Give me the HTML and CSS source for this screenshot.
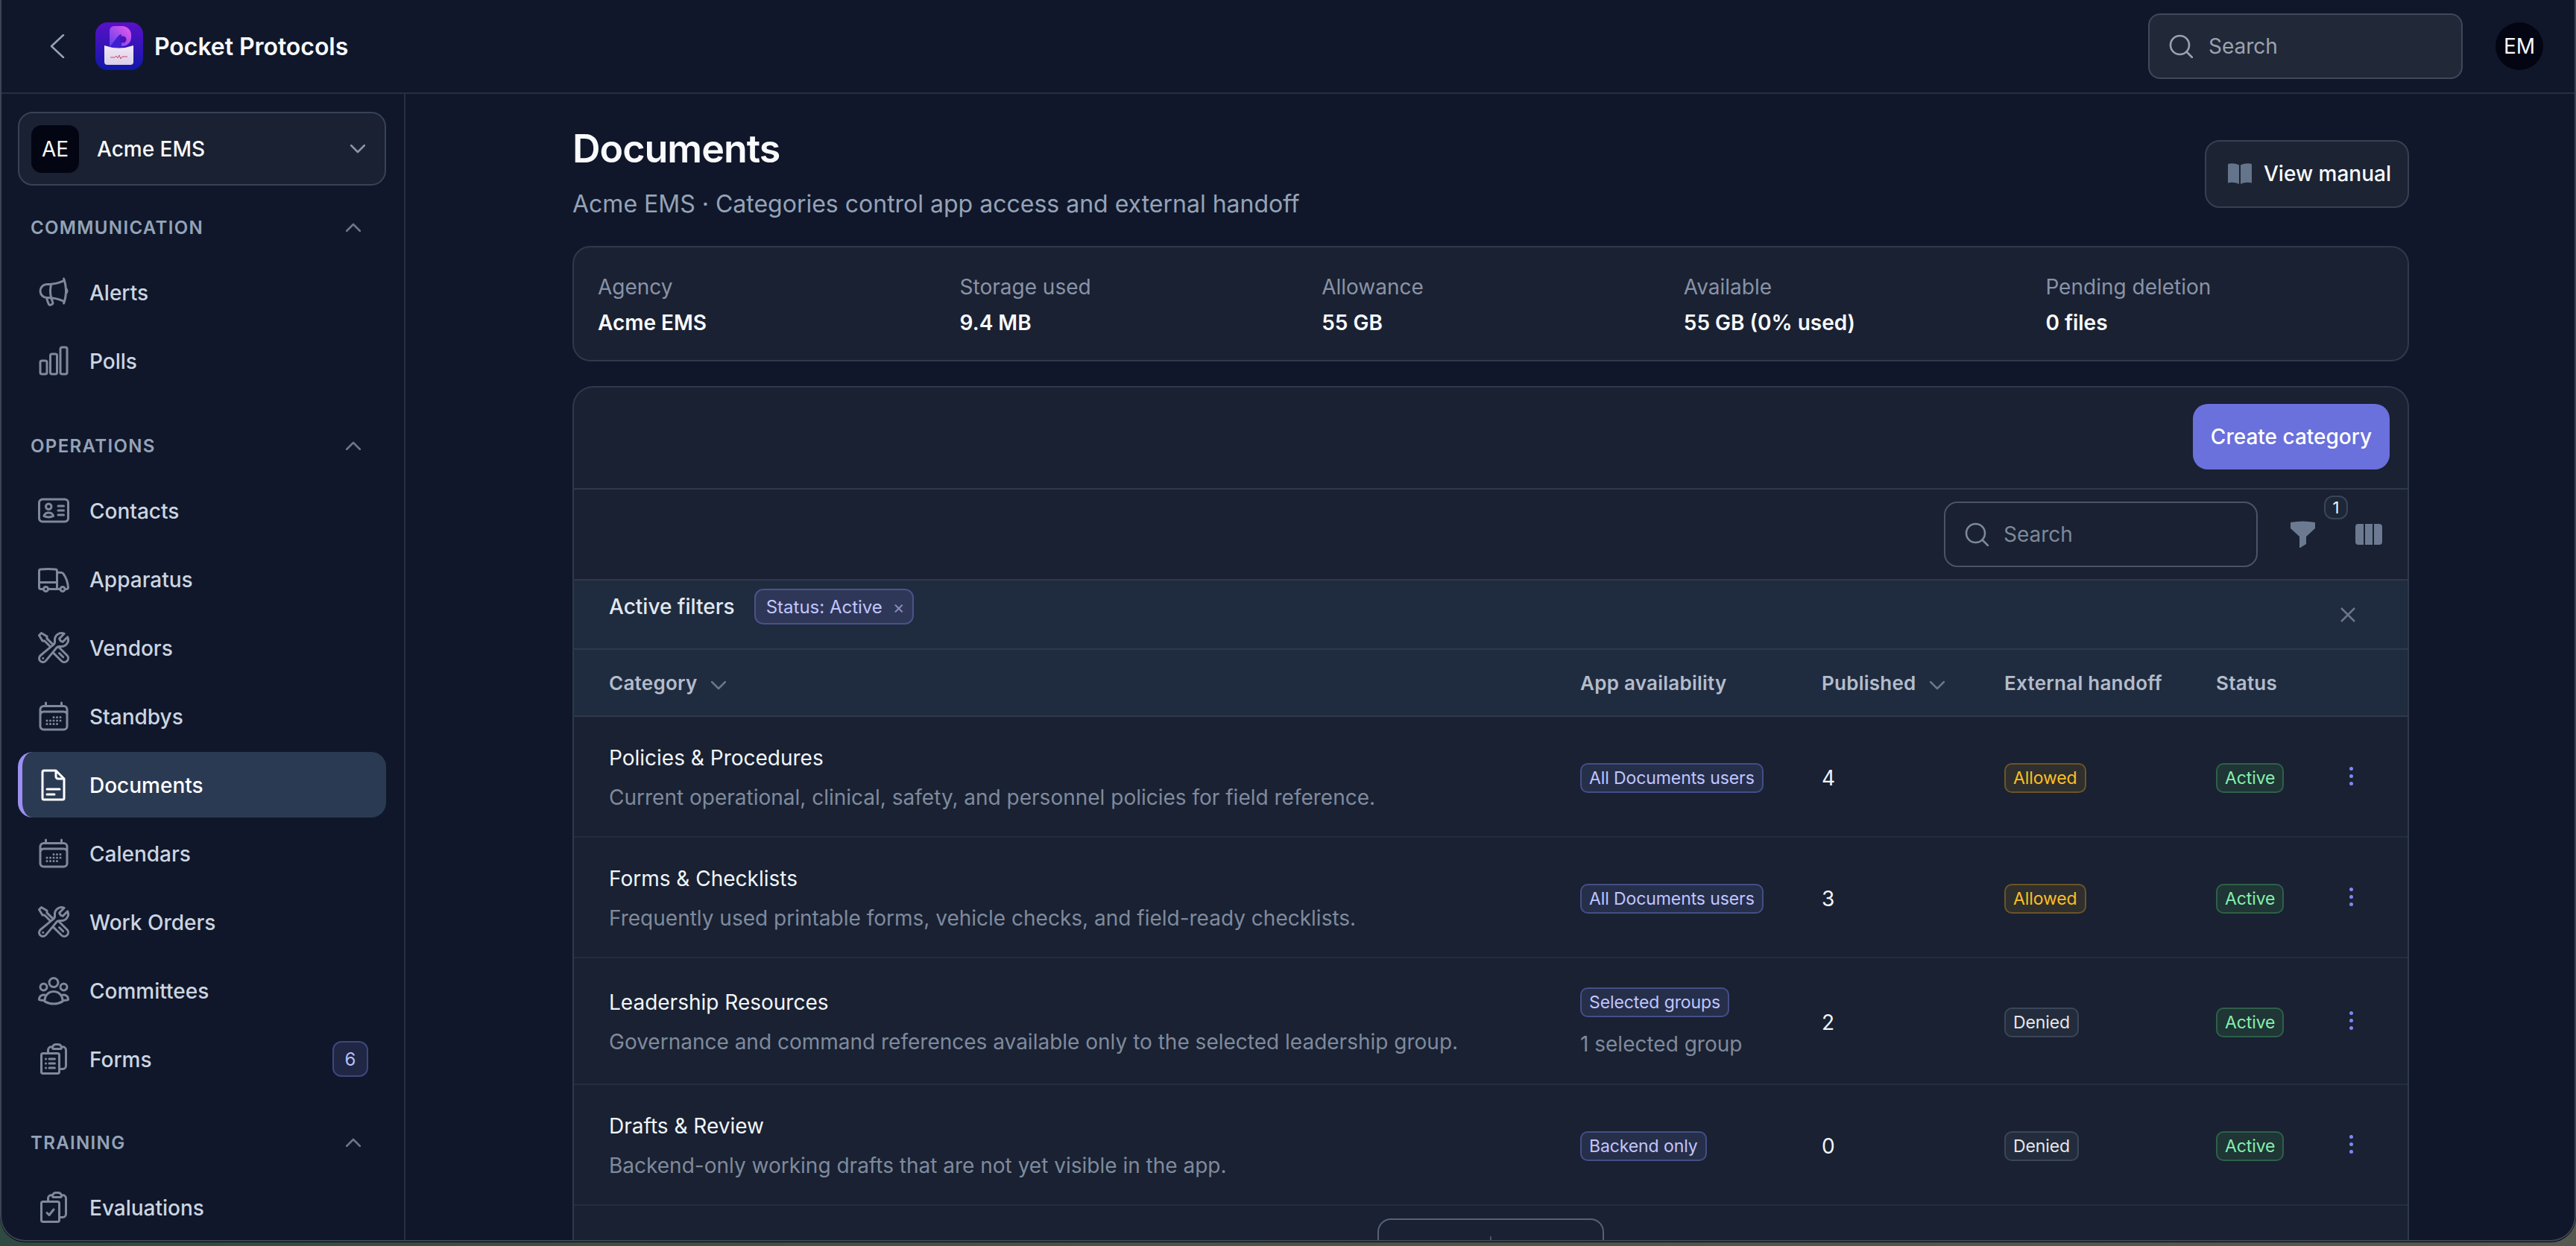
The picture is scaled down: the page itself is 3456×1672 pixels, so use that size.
FILE: index.html
```html
<!DOCTYPE html>
<html lang="en">
<head>
    <meta charset="UTF-8">
    <meta name="viewport" content="width=device-width, initial-scale=1.0">
    <title>Documents</title>
    <link rel="stylesheet" href="styles.css">
</head>
<body>
    <!-- icon sprite -->
    <svg class="sprite">
        <symbol id="i-megaphone" viewBox="0 0 24 24"><path d="M10.34 15.84c-.688-.06-1.386-.09-2.09-.09H7.5a4.5 4.5 0 1 1 0-9h.75c.704 0 1.402-.03 2.09-.09m0 9.18c.253.962.584 1.892.985 2.783.247.55.06 1.21-.463 1.511l-.657.38c-.551.318-1.26.117-1.527-.461a20.845 20.845 0 0 1-1.44-4.282m3.102.069a18.03 18.03 0 0 1-.59-4.59c0-1.586.205-3.124.59-4.59m0 9.18a23.848 23.848 0 0 1 8.835 2.535M10.34 6.66a23.847 23.847 0 0 0 8.835-2.535m0 0A23.74 23.74 0 0 0 18.795 3m.38 1.125a23.91 23.91 0 0 1 1.014 5.395m-1.014 8.855c-.118.38-.245.754-.38 1.125m.38-1.125a23.91 23.91 0 0 0 1.014-5.395m0-3.46c.495.413.811 1.035.811 1.73 0 .695-.316 1.317-.811 1.73m0-3.46a24.347 24.347 0 0 1 0 3.46"/></symbol>
        <symbol id="i-chart" viewBox="0 0 24 24"><path d="M3 13.125C3 12.504 3.504 12 4.125 12h2.25c.621 0 1.125.504 1.125 1.125v6.75C7.5 20.496 6.996 21 6.375 21h-2.25A1.125 1.125 0 0 1 3 19.875v-6.75ZM9.75 8.625c0-.621.504-1.125 1.125-1.125h2.25c.621 0 1.125.504 1.125 1.125v11.25c0 .621-.504 1.125-1.125 1.125h-2.25a1.125 1.125 0 0 1-1.125-1.125V8.625ZM16.5 4.125c0-.621.504-1.125 1.125-1.125h2.25C20.496 3 21 3.504 21 4.125v15.75c0 .621-.504 1.125-1.125 1.125h-2.25a1.125 1.125 0 0 1-1.125-1.125V4.125Z"/></symbol>
        <symbol id="i-card" viewBox="0 0 24 24"><path d="M15 9h3.75M15 12h3.75M15 15h3.75M4.500 19.500h15a2.250 2.250 0 0 0 2.250-2.250V6.750A2.250 2.250 0 0 0 19.500 4.500h-15a2.250 2.250 0 0 0-2.250 2.250v10.500A2.250 2.250 0 0 0 4.500 19.500Zm6-10.125a1.875 1.875 0 1 1-3.750 0 1.875 1.875 0 0 1 3.750 0Zm1.294 6.336a6.721 6.721 0 0 1-3.170.789 6.721 6.721 0 0 1-3.168-.789 3.376 3.376 0 0 1 6.338 0Z"/></symbol>
        <symbol id="i-truck" viewBox="0 0 24 24"><path d="M8.25 18.75a1.5 1.5 0 0 1-3 0m3 0a1.5 1.5 0 0 0-3 0m3 0h6m-9 0H3.375a1.125 1.125 0 0 1-1.125-1.125V14.25m17.25 4.5a1.5 1.5 0 0 1-3 0m3 0a1.5 1.5 0 0 0-3 0m3 0h1.125c.621 0 1.129-.504 1.09-1.124a17.902 17.902 0 0 0-3.213-9.193 2.056 2.056 0 0 0-1.58-.86H14.25M16.5 18.75h-2.25m0-11.177v-.958c0-.568-.422-1.048-.987-1.106a48.554 48.554 0 0 0-10.026 0 1.106 1.106 0 0 0-.987 1.106v7.635m12-6.677v6.677m0 4.5v-4.5m0 0h-12"/></symbol>
        <symbol id="i-tools" viewBox="0 0 24 24"><path d="M11.42 15.17 17.25 21A2.652 2.652 0 0 0 21 17.25l-5.877-5.877M11.42 15.17l2.496-3.03c.317-.384.74-.626 1.208-.766M11.42 15.17l-4.655 5.653a2.548 2.548 0 1 1-3.586-3.586l6.837-5.63m5.108-.233c.55-.164 1.163-.188 1.743-.14a4.5 4.5 0 0 0 4.486-6.336l-3.276 3.277a3.004 3.004 0 0 1-2.25-2.25l3.276-3.276a4.5 4.5 0 0 0-6.336 4.486c.091 1.076-.071 2.264-.904 2.95l-.102.085m-1.745 1.437L5.909 7.5H4.5L2.25 3.75l1.5-1.5L7.5 4.5v1.409l4.26 4.26m-1.745 1.437 1.745-1.437m6.615 8.206L15.75 15.75M4.867 19.125h.008v.008h-.008v-.008Z"/></symbol>
        <symbol id="i-calendar" viewBox="0 0 24 24"><path d="M6.75 3v2.25M17.25 3v2.25M3 18.75V7.5a2.25 2.25 0 0 1 2.25-2.25h13.5A2.25 2.25 0 0 1 21 7.5v11.25m-18 0A2.25 2.25 0 0 0 5.25 21h13.5A2.25 2.25 0 0 0 21 18.75m-18 0v-7.5A2.25 2.25 0 0 1 5.25 9h13.5A2.25 2.25 0 0 1 21 11.25v7.5m-9-6h.008v.008H12v-.008ZM12 15h.008v.008H12V15Zm0 2.25h.008v.008H12v-.008ZM9.75 15h.008v.008H9.75V15Zm0 2.25h.008v.008H9.75v-.008ZM7.5 15h.008v.008H7.5V15Zm0 2.25h.008v.008H7.5v-.008Zm6.75-4.5h.008v.008h-.008v-.008Zm0 2.25h.008v.008h-.008V15Zm0 2.25h.008v.008h-.008v-.008Zm2.25-4.5h.008v.008H16.5v-.008Zm0 2.25h.008v.008H16.5V15Z"/></symbol>
        <symbol id="i-doc" viewBox="0 0 24 24"><path d="M5.5 2.5h8l5.5 5.5v13a1 1 0 0 1-1 1H5.5a1 1 0 0 1-1-1V3.5a1 1 0 0 1 1-1ZM13.5 2.5v4A1.5 1.5 0 0 0 15 8h4M7.5 15h8.5M7.5 18.5h5"/></symbol>
        <symbol id="i-group" viewBox="0 0 24 24"><path d="M18 18.72a9.094 9.094 0 0 0 3.741-.479 3 3 0 0 0-4.682-2.72m.94 3.198.001.031c0 .225-.012.447-.037.666A11.944 11.944 0 0 1 12 21c-2.17 0-4.207-.576-5.963-1.584A6.062 6.062 0 0 1 6 18.719m12 0a5.971 5.971 0 0 0-.941-3.197m0 0A5.995 5.995 0 0 0 12 12.75a5.995 5.995 0 0 0-5.058 2.772m0 0a3 3 0 0 0-4.681 2.72 8.986 8.986 0 0 0 3.74.477m.94-3.197a5.971 5.971 0 0 0-.94 3.197M15 6.75a3 3 0 1 1-6 0 3 3 0 0 1 6 0Zm6 3a2.25 2.25 0 1 1-4.5 0 2.25 2.25 0 0 1 4.5 0Zm-13.5 0a2.25 2.25 0 1 1-4.5 0 2.25 2.25 0 0 1 4.5 0Z"/></symbol>
        <symbol id="i-cliplist" viewBox="0 0 24 24"><path d="M9 12h3.75M9 15h3.75M9 18h3.75m3 .75H18a2.25 2.25 0 0 0 2.25-2.25V6.108c0-1.135-.845-2.098-1.976-2.192a48.424 48.424 0 0 0-1.123-.08m-5.801 0c-.065.21-.1.433-.1.664 0 .414.336.75.75.75h4.5a.75.75 0 0 0 .75-.75 2.25 2.25 0 0 0-.1-.664m-5.8 0A2.251 2.251 0 0 1 13.5 2.25H15c1.012 0 1.867.668 2.15 1.586m-5.8 0c-.376.023-.75.05-1.124.08C9.095 4.01 8.25 4.973 8.25 6.108V8.25m0 0H4.875c-.621 0-1.125.504-1.125 1.125v11.25c0 .621.504 1.125 1.125 1.125h9.75c.621 0 1.125-.504 1.125-1.125V9.375c0-.621-.504-1.125-1.125-1.125H8.25ZM6.75 12h.008v.008H6.75V12Zm0 3h.008v.008H6.75V15Zm0 3h.008v.008H6.75V18Z"/></symbol>
        <symbol id="i-clipcheck" viewBox="0 0 24 24"><path d="M11.35 3.836c-.065.21-.1.433-.1.664 0 .414.336.75.75.75h4.5a.75.75 0 0 0 .75-.75 2.25 2.25 0 0 0-.1-.664m-5.8 0A2.251 2.251 0 0 1 13.5 2.25H15c1.012 0 1.867.668 2.15 1.586m-5.8 0c-.376.023-.75.05-1.124.08C9.095 4.01 8.25 4.973 8.25 6.108V8.25m8.9-4.414c.376.023.75.05 1.124.08 1.131.094 1.976 1.057 1.976 2.192V16.5A2.25 2.25 0 0 1 18 18.75h-2.25m-7.5-10.5H4.875c-.621 0-1.125.504-1.125 1.125v11.25c0 .621.504 1.125 1.125 1.125h9.75c.621 0 1.125-.504 1.125-1.125V18.75m-7.5-10.5h6.375c.621 0 1.125.504 1.125 1.125v9.375m-8.25-3 1.5 1.5 3-3.75"/></symbol>
        <symbol id="i-search" viewBox="0 0 32 32"><circle cx="14.5" cy="14.5" r="12.5"/><path d="M23.5 23.5 31 31"/></symbol>
        <symbol id="i-up" viewBox="0 0 20 12"><path d="M1 11 10 2l9 9"/></symbol>
        <symbol id="i-down" viewBox="0 0 20 12"><path d="m1 1 9 9 9-9"/></symbol>
    </svg>

    <div class="window">
        <header class="topbar">
            <svg class="back-icon" viewBox="0 0 20 32"><path d="M18 1 2 16l16 15"/></svg>
            <svg class="logo" viewBox="0 0 64 64">
                <defs>
                    <linearGradient id="logoBg" x1="0" y1="0" x2="0" y2="1">
                        <stop offset="0" stop-color="#5a10c8"/>
                        <stop offset="1" stop-color="#0f18a8"/>
                    </linearGradient>
                    <linearGradient id="logoP" x1="0" y1="1" x2="1" y2="0">
                        <stop offset="0" stop-color="#5a3cf0"/>
                        <stop offset="1" stop-color="#ee5ce8"/>
                    </linearGradient>
                    <linearGradient id="logoPocket" x1="0" y1="0" x2="0" y2="1">
                        <stop offset="0" stop-color="#f3e8f6"/>
                        <stop offset="1" stop-color="#d9cfe8"/>
                    </linearGradient>
                </defs>
                <rect width="64" height="64" rx="16" fill="url(#logoBg)"/>
                <path d="M19 33V11a6 6 0 0 1 6-6h11a12 12 0 0 1 12 12v3a12 12 0 0 1-12 12h-4v2Z" fill="url(#logoP)"/>
                <path d="M19 33 30 19q2-3 5-3v18h-3Z" fill="#3f1fd0"/>
                <circle cx="37" cy="23" r="4.500" fill="#4a12b8"/>
                <path d="M12 31q19.500 7 39 0v22a4 4 0 0 1-4 4H16a4 4 0 0 1-4-4Z" fill="url(#logoPocket)"/>
                <path d="M20 47h6l2-2 2 3 2-4 2 5 2-3h7" fill="none" stroke="#c84a62" stroke-width="1"/>
            </svg>
            <span class="app-name">Pocket Protocols</span>
            <div class="top-search">
                <svg class="search-icon"><use href="#i-search"/></svg>
                <span>Search</span>
            </div>
            <div class="user-avatar">EM</div>
        </header>

        <div class="layout">
            <aside class="sidebar">
                <div class="org-switch">
                    <span class="org-avatar">AE</span>
                    <span class="org-name">Acme EMS</span>
                    <svg class="org-chevron"><use href="#i-down"/></svg>
                </div>

                <div class="nav-section first">
                    <span>Communication</span>
                    <svg class="section-chevron"><use href="#i-up"/></svg>
                </div>
                <nav class="nav-list">
                    <a class="nav-item"><svg class="nav-icon"><use href="#i-megaphone"/></svg><span class="nav-label">Alerts</span></a>
                    <a class="nav-item"><svg class="nav-icon"><use href="#i-chart"/></svg><span class="nav-label">Polls</span></a>
                </nav>

                <div class="nav-section">
                    <span>Operations</span>
                    <svg class="section-chevron"><use href="#i-up"/></svg>
                </div>
                <nav class="nav-list">
                    <a class="nav-item"><svg class="nav-icon"><use href="#i-card"/></svg><span class="nav-label">Contacts</span></a>
                    <a class="nav-item"><svg class="nav-icon"><use href="#i-truck"/></svg><span class="nav-label">Apparatus</span></a>
                    <a class="nav-item"><svg class="nav-icon"><use href="#i-tools"/></svg><span class="nav-label">Vendors</span></a>
                    <a class="nav-item"><svg class="nav-icon"><use href="#i-calendar"/></svg><span class="nav-label">Standbys</span></a>
                    <a class="nav-item active"><svg class="nav-icon"><use href="#i-doc"/></svg><span class="nav-label">Documents</span></a>
                    <a class="nav-item"><svg class="nav-icon"><use href="#i-calendar"/></svg><span class="nav-label">Calendars</span></a>
                    <a class="nav-item"><svg class="nav-icon"><use href="#i-tools"/></svg><span class="nav-label">Work Orders</span></a>
                    <a class="nav-item"><svg class="nav-icon"><use href="#i-group"/></svg><span class="nav-label">Committees</span></a>
                    <a class="nav-item"><svg class="nav-icon"><use href="#i-cliplist"/></svg><span class="nav-label">Forms</span><span class="nav-count">6</span></a>
                </nav>

                <div class="nav-section last">
                    <span>Training</span>
                    <svg class="section-chevron"><use href="#i-up"/></svg>
                </div>
                <nav class="nav-list">
                    <a class="nav-item"><svg class="nav-icon"><use href="#i-clipcheck"/></svg><span class="nav-label">Evaluations</span></a>
                </nav>
            </aside>

            <main class="main">
                <div class="content">
                    <div class="page-head">
                        <div>
                            <h1>Documents</h1>
                            <p class="subtitle">Acme EMS · Categories control app access and external handoff</p>
                        </div>
                        <button class="manual-btn">
                            <svg class="book-icon" viewBox="0 0 32 28"><path d="M0 1c5-1.300 10-.8 15 1.500V28C10 25.800 5 25.300 0 26.500ZM32 1c-5-1.300-10-.8-15 1.500V28c5-2.200 10-2.700 15-1.500Z"/></svg>
                            View manual
                        </button>
                    </div>

                    <section class="stats">
                        <div><div class="stat-label">Agency</div><div class="stat-value">Acme EMS</div></div>
                        <div><div class="stat-label">Storage used</div><div class="stat-value">9.4 MB</div></div>
                        <div><div class="stat-label">Allowance</div><div class="stat-value">55 GB</div></div>
                        <div><div class="stat-label">Available</div><div class="stat-value">55 GB (0% used)</div></div>
                        <div><div class="stat-label">Pending deletion</div><div class="stat-value">0 files</div></div>
                    </section>

                    <section class="table-card">
                        <div class="card-actions">
                            <button class="create-btn">Create category</button>
                        </div>
                        <div class="table-tools">
                            <div class="table-search">
                                <svg class="search-icon"><use href="#i-search"/></svg>
                                <span>Search</span>
                            </div>
                            <div class="filter-btn">
                                <svg class="filter-icon" viewBox="0 0 33 36"><path d="M0 2Q16.500-1 33 2v8L21 21v10l-8 5h-1V21L0 10Z"/></svg>
                                <span class="filter-count">1</span>
                            </div>
                            <svg class="columns-icon" viewBox="0 0 36 28"><path d="M4 0h7v28H4a4 4 0 0 1-4-4V4a4 4 0 0 1 4-4ZM13 0h10v28H13ZM25 0h7a4 4 0 0 1 4 4v20a4 4 0 0 1-4 4h-7Z"/></svg>
                        </div>
                        <div class="active-filters">
                            <span class="filters-label">Active filters</span>
                            <span class="filter-chip">Status: Active <i>×</i></span>
                            <svg class="filters-close" viewBox="0 0 20 20"><path d="m1 1 18 18M19 1 1 19"/></svg>
                        </div>

                        <table class="data-table">
                            <colgroup>
                                <col class="col-category">
                                <col class="col-app">
                                <col class="col-published">
                                <col class="col-handoff">
                                <col class="col-status">
                                <col class="col-menu">
                            </colgroup>
                            <thead>
                                <tr>
                                    <th>Category <svg class="sort-icon"><use href="#i-down"/></svg></th>
                                    <th>App availability</th>
                                    <th>Published <svg class="sort-icon"><use href="#i-down"/></svg></th>
                                    <th>External handoff</th>
                                    <th>Status</th>
                                    <th></th>
                                </tr>
                            </thead>
                            <tbody>
                                <tr>
                                    <td>
                                        <div class="cat-name">Policies &amp; Procedures</div>
                                        <div class="cat-desc">Current operational, clinical, safety, and personnel policies for field reference.</div>
                                    </td>
                                    <td><span class="tag tag-app">All Documents users</span></td>
                                    <td class="num">4</td>
                                    <td><span class="tag tag-allowed">Allowed</span></td>
                                    <td><span class="tag tag-active">Active</span></td>
                                    <td><span class="kebab"><i></i><i></i><i></i></span></td>
                                </tr>
                                <tr>
                                    <td>
                                        <div class="cat-name">Forms &amp; Checklists</div>
                                        <div class="cat-desc">Frequently used printable forms, vehicle checks, and field-ready checklists.</div>
                                    </td>
                                    <td><span class="tag tag-app">All Documents users</span></td>
                                    <td class="num">3</td>
                                    <td><span class="tag tag-allowed">Allowed</span></td>
                                    <td><span class="tag tag-active">Active</span></td>
                                    <td><span class="kebab"><i></i><i></i><i></i></span></td>
                                </tr>
                                <tr class="row-tall">
                                    <td>
                                        <div class="cat-name">Leadership Resources</div>
                                        <div class="cat-desc">Governance and command references available only to the selected leadership group.</div>
                                    </td>
                                    <td>
                                        <span class="tag tag-app">Selected groups</span>
                                        <div class="app-note">1 selected group</div>
                                    </td>
                                    <td class="num">2</td>
                                    <td><span class="tag tag-denied">Denied</span></td>
                                    <td><span class="tag tag-active">Active</span></td>
                                    <td><span class="kebab"><i></i><i></i><i></i></span></td>
                                </tr>
                                <tr>
                                    <td>
                                        <div class="cat-name">Drafts &amp; Review</div>
                                        <div class="cat-desc">Backend-only working drafts that are not yet visible in the app.</div>
                                    </td>
                                    <td><span class="tag tag-app">Backend only</span></td>
                                    <td class="num">0</td>
                                    <td><span class="tag tag-denied">Denied</span></td>
                                    <td><span class="tag tag-active">Active</span></td>
                                    <td><span class="kebab"><i></i><i></i><i></i></span></td>
                                </tr>
                            </tbody>
                        </table>

                        <div class="pager">
                            <div class="pager-box"><span class="pager-split"></span></div>
                        </div>
                    </section>
                </div>
            </main>
        </div>
    </div>
</body>
</html>
```

FILE: styles.css
```css
* {
    box-sizing: border-box;
}

html, body {
    margin: 0;
    height: 100%;
    overflow: hidden;
}

body {
    background: linear-gradient(90deg, #2f4a42, #4a5548 50%, #55594f);
    font-family: Inter, "Noto Sans", sans-serif;
    color: #f8fafc;
}

.sprite {
    display: none;
}

/* 窗口 */
.window {
    display: flex;
    flex-direction: column;
    height: 1666px;
    background-color: #10172a;
    border: 2px solid #3c4354;
    border-top: 0;
    border-radius: 0 0 34px 34px;
    box-shadow: 0 1px 0 #05070c;
    overflow: hidden;
}

/* 顶栏 */
.topbar {
    display: flex;
    align-items: center;
    flex: none;
    height: 126px;
    padding-left: 65px;
    padding-right: 42px;
    border-bottom: 2px solid #262e40;
    background-color: #10172a;
}

.back-icon {
    width: 20px;
    height: 32px;
    fill: none;
    stroke: #94a3b8;
    stroke-width: 2.5;
    stroke-linecap: round;
    stroke-linejoin: round;
    margin-right: 41px;
}

.logo {
    width: 64px;
    height: 64px;
    flex: none;
}

.app-name {
    margin-left: 15px;
    font-size: 32px;
    font-weight: 600;
    letter-spacing: -0.05px;
}

.search-icon {
    width: 32px;
    height: 32px;
    flex: none;
    fill: none;
    stroke: currentColor;
    stroke-width: 2.6;
    stroke-linecap: round;
}

.top-search {
    display: flex;
    align-items: center;
    gap: 21px;
    width: 422px;
    height: 88px;
    margin-left: auto;
    padding-left: 26px;
    border: 2px solid #404859;
    border-radius: 16px;
    background-color: #212838;
    color: #9ca3af;
    font-size: 28px;
}

.user-avatar {
    display: flex;
    align-items: center;
    justify-content: center;
    width: 64px;
    height: 64px;
    margin-left: 44px;
    border-radius: 50%;
    background-color: #030512;
    font-size: 28px;
}

.layout {
    display: flex;
    flex: 1;
    min-height: 0;
}

/* 侧边栏 */
.sidebar {
    flex: none;
    width: 542px;
    padding: 24px 24px 0 22px;
    border-right: 2px solid #262e40;
    overflow: hidden;
}

.org-switch {
    display: flex;
    align-items: center;
    height: 99px;
    padding: 0 26px 0 16px;
    border: 2px solid #374257;
    border-radius: 20px;
    background-color: #1a2132;
}

.org-avatar {
    display: flex;
    align-items: center;
    justify-content: center;
    width: 64px;
    height: 64px;
    border-radius: 14px;
    background-color: #030512;
    font-size: 28px;
}

.org-name {
    margin-left: 24px;
    font-size: 28px;
    font-weight: 500;
}

.org-chevron {
    width: 20px;
    height: 12px;
    margin-left: auto;
    fill: none;
    stroke: #8a94a6;
    stroke-width: 2.6;
    stroke-linecap: round;
    stroke-linejoin: round;
}

.nav-section {
    display: flex;
    align-items: center;
    justify-content: space-between;
    height: 40px;
    margin-top: 50px;
    margin-bottom: 23px;
    padding: 0 34px 0 17px;
    color: #94a3b8;
    font-size: 24px;
    font-weight: 600;
    letter-spacing: 1.35px;
    text-transform: uppercase;
}

.nav-section.first {
    margin-top: 36px;
}

.nav-section.last {
    margin-top: 48px;
}

.section-chevron {
    width: 20px;
    height: 12px;
    fill: none;
    stroke: #6b7689;
    stroke-width: 2.6;
    stroke-linecap: round;
    stroke-linejoin: round;
}

.nav-list {
    display: flex;
    flex-direction: column;
    gap: 4px;
}

.nav-item {
    display: flex;
    align-items: center;
    gap: 24px;
    height: 88px;
    padding: 0 24px;
    border-radius: 20px;
    color: #cbd5e1;
    font-size: 28px;
    font-weight: 500;
}

.nav-label {
    padding-top: 2px;
}

.nav-icon {
    width: 48px;
    height: 48px;
    flex: none;
    fill: none;
    stroke: #7f899b;
    stroke-width: 1.5;
    stroke-linecap: round;
    stroke-linejoin: round;
}

.nav-item.active {
    background-color: #2b3a53;
    border-left: 6px solid #9b8ff2;
    padding-left: 18px;
    color: #fff;
}

.nav-item.active .nav-icon {
    stroke: #fff;
}

.nav-count {
    display: flex;
    align-items: center;
    justify-content: center;
    width: 48px;
    height: 48px;
    margin-left: auto;
    border: 2px solid #3d477c;
    border-radius: 12px;
    background-color: #1f2744;
    color: #b6bffc;
    font-size: 24px;
    font-weight: 400;
}

/* 主内容 */
.main {
    flex: 1;
    min-width: 0;
    padding-left: 2px;
    overflow: hidden;
}

.content {
    width: 2464px;
    margin: 0 auto;
    padding-top: 44px;
}

.page-head {
    display: flex;
    align-items: center;
    justify-content: space-between;
    margin-bottom: 34px;
}

h1 {
    margin: 0;
    font-size: 52px;
    line-height: 60px;
    font-weight: 600;
    letter-spacing: -1px;
}

.subtitle {
    margin: 22px 0 0;
    color: #94a3b8;
    font-size: 32px;
    line-height: 44px;
}

.manual-btn {
    display: flex;
    align-items: center;
    gap: 16px;
    height: 91px;
    width: 274px;
    padding: 0 0 0 29px;
    border: 2px solid #374053;
    border-radius: 20px;
    background-color: #1c2333;
    color: #f8fafc;
    font-family: inherit;
    font-size: 28px;
    font-weight: 500;
}

.book-icon {
    width: 32px;
    height: 28px;
    fill: #64748b;
}

.stats {
    display: grid;
    grid-template-columns: repeat(5, 1fr);
    gap: 32px;
    padding: 35px 32px 32px;
    border: 2px solid #2f394c;
    border-radius: 24px;
    background-color: #1a2132;
}

.stat-label {
    color: #8893a7;
    font-size: 28px;
    line-height: 36px;
}

.stat-value {
    margin-top: 12px;
    font-size: 28px;
    line-height: 36px;
    font-weight: 600;
}

/* 表格卡片 */
.table-card {
    margin-top: 33px;
    border: 2px solid #2f394c;
    border-bottom: 0;
    border-radius: 28px 28px 0 0;
    background-color: #192132;
}

.card-actions {
    display: flex;
    justify-content: flex-end;
    height: 137px;
    padding: 22px 24px 0 0;
    border-bottom: 2px solid #2f394c;
}

.create-btn {
    width: 264px;
    height: 88px;
    border: 0;
    border-radius: 20px;
    background-color: #6a70dc;
    color: #fff;
    font-family: inherit;
    font-size: 28px;
    font-weight: 500;
}

.table-tools {
    display: flex;
    align-items: center;
    justify-content: flex-end;
    height: 122px;
    padding: 0 34px 0 0;
    border-bottom: 2px solid #2f394c;
}

.table-search {
    display: flex;
    align-items: center;
    gap: 20px;
    width: 421px;
    height: 88px;
    padding-left: 26px;
    border: 2px solid #4a5468;
    border-radius: 18px;
    color: #7d889b;
    font-size: 28px;
}

.filter-btn {
    position: relative;
    display: flex;
    margin-left: 44px;
}

.filter-icon {
    width: 33px;
    height: 36px;
    fill: #6b7a90;
}

.filter-count {
    position: absolute;
    top: -34px;
    left: 45px;
    display: flex;
    align-items: center;
    justify-content: center;
    width: 32px;
    height: 32px;
    border: 2px solid #3a4558;
    border-radius: 12px;
    background-color: #1e2737;
    color: #f1f5f9;
    font-size: 22px;
}

.columns-icon {
    width: 36px;
    height: 28px;
    margin-left: 54px;
    fill: #6b7a90;
}

.active-filters {
    display: flex;
    align-items: flex-start;
    height: 93px;
    padding: 11px 70px 0 47px;
    border-bottom: 2px solid #2f394c;
    background-color: #1f2b3f;
}

.filters-label {
    font-size: 28px;
    line-height: 48px;
    font-weight: 500;
    color: #e2e8f0;
}

.filter-chip {
    display: flex;
    align-items: center;
    gap: 14px;
    height: 48px;
    margin-left: 26px;
    padding: 0 10px 0 14px;
    border: 2px solid #4a5388;
    border-radius: 12px;
    background-color: #2f3758;
    color: #c0c5ff;
    font-size: 24px;
}

.filter-chip i {
    color: #8a8fc0;
    font-style: normal;
}

.filters-close {
    width: 20px;
    height: 20px;
    margin-left: auto;
    align-self: center;
    margin-top: -10px;
    fill: none;
    stroke: #6b7689;
    stroke-width: 2.5;
}

.data-table {
    width: 100%;
    table-layout: fixed;
    border-collapse: collapse;
}

.col-category { width: 1350px; }
.col-app { width: 324px; }
.col-published { width: 245px; }
.col-handoff { width: 284px; }
.col-status { width: 167px; }
.col-menu { width: 90px; }

th {
    height: 89px;
    padding: 0;
    border-bottom: 2px solid #2f394c;
    background-color: #1f2b3f;
    color: #b3bccb;
    font-size: 26px;
    font-weight: 600;
    letter-spacing: 0.25px;
    text-align: left;
}

th:first-child, td:first-child {
    padding-left: 47px;
}

.sort-icon {
    width: 20px;
    height: 12px;
    margin-left: 12px;
    fill: none;
    stroke: #6b7689;
    stroke-width: 2.5;
    stroke-linecap: round;
    stroke-linejoin: round;
}

td {
    height: 162px;
    padding: 3px 0 0;
    border-bottom: 2px solid #242d40;
    font-size: 28px;
}

.row-tall td {
    height: 170px;
}

.cat-name {
    font-size: 28px;
    line-height: 40px;
    color: #f1f5f9;
}

.cat-desc {
    margin-top: 13px;
    color: #7f8a9d;
    font-size: 28px;
    line-height: 40px;
}

.num {
    color: #f1f5f9;
}

.tag {
    display: inline-flex;
    align-items: center;
    height: 40px;
    padding: 0 10px;
    border: 2px solid;
    border-radius: 10px;
    font-size: 23px;
    letter-spacing: -0.1px;
    vertical-align: middle;
}

.tag-app {
    background-color: #262f4a;
    border-color: #454e86;
    color: #c0c5ff;
}

.tag-allowed {
    background-color: #2f2f2e;
    border-color: #6b5525;
    color: #fbbf24;
}

.tag-active {
    background-color: #1f3536;
    border-color: #2f6048;
    color: #86efac;
}

.tag-denied {
    background-color: #232c3c;
    border-color: #3b4658;
    color: #e5e7eb;
}

.app-note {
    margin-top: 18px;
    color: #7f8a9d;
    font-size: 28px;
    line-height: 36px;
}

.kebab {
    display: flex;
    flex-direction: column;
    gap: 5px;
    margin-left: 12px;
    margin-top: -4px;
}

.kebab i {
    width: 5px;
    height: 5px;
    border-radius: 50%;
    background-color: #7f86f5;
}

.pager {
    display: flex;
    justify-content: center;
    padding-top: 17px;
}

.pager-box {
    display: flex;
    justify-content: center;
    width: 304px;
    height: 60px;
    border: 2px solid #566178;
    border-radius: 18px;
}

.pager-split {
    width: 2px;
    height: 30px;
    margin-top: 22px;
    background-color: #4a5468;
}
```
